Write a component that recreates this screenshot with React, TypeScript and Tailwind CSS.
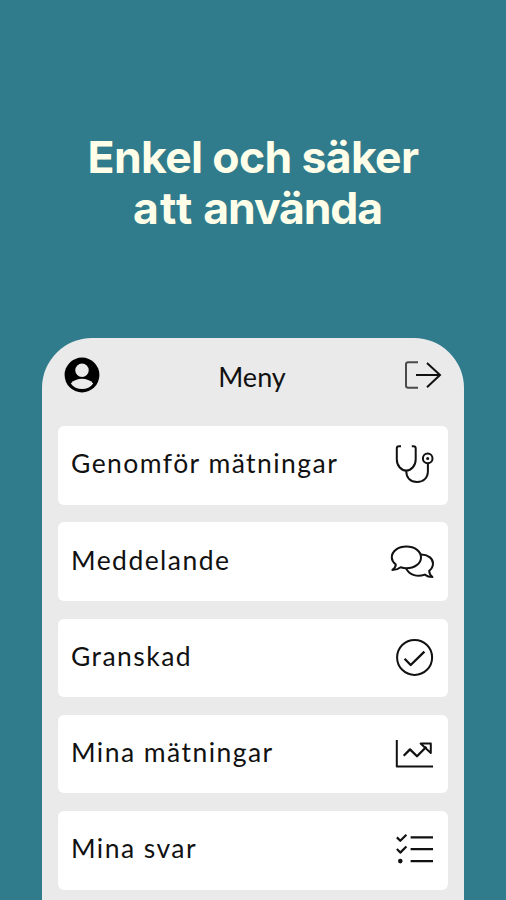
import type { ReactNode } from 'react'

interface MenuItem {
  label: string
  icon: ReactNode
}

const menuItems: MenuItem[] = [
  {
    label: 'Genomför mätningar',
    icon: (
      <>
        <path d="M11 3.2H9Q6.8 3.2 6.8 5.4V16.2C6.8 22.6 11 27.5 16.2 27.5S25.7 22.6 25.7 16.2V5.4Q25.7 3.2 23.5 3.2H21.8" />
        <path d="M16.2 27.5C16.2 35 20.6 39 27 39S37.9 35 37.9 28V20.4" />
        <circle cx="37.7" cy="15.4" r="4.8" />
        <circle cx="37.7" cy="15.4" r="1.5" fill="currentColor" stroke="none" />
      </>
    ),
  },
  {
    label: 'Meddelande',
    icon: (
      <>
        <path d="M10.7 27.2C12.4 27.8 14.3 28.2 16.4 28.2C24.5 28.2 31 23.6 31 17.4S24.5 6.6 16.4 6.6S1.8 11.2 1.8 17.4C1.8 20 3.4 22.4 5.8 24.4C5.8 26.6 4.2 28.6 2.3 30C5.6 30 8.6 28.8 10.7 27.2Z" />
        <path d="M31 14.6C38 14.6 43 18.3 43 23.4C43 26.2 41.6 28.8 39.2 30.8C39.2 33.4 40.6 35.5 42.4 37C39.4 37 36.8 36.2 34.8 34.6C27.6 37.2 19.6 35.4 16.2 28.6" />
      </>
    ),
  },
  {
    label: 'Granskad',
    icon: (
      <>
        <circle cx="24.6" cy="21.4" r="17.5" />
        <path d="M14.6 22.8L20.7 29L34.4 15.6" strokeWidth="2.3" />
      </>
    ),
  },
  {
    label: 'Mina mätningar',
    icon: (
      <>
        <path d="M6.8 8V34.6H43" />
        <path d="M13.7 23.7L20 17.4L27 24.2L36.4 14.8" strokeWidth="2.3" />
        <path d="M30.6 11.6H40.8V21Z" />
      </>
    ),
  },
  {
    label: 'Mina svar',
    icon: (
      <>
        <path d="M6.9 9.4L10.3 12.8L16.4 6.8M6.9 21.1L10.3 24.6L16.4 18.5" strokeWidth="2.2" />
        <circle cx="10.3" cy="33.1" r="2.3" fill="currentColor" stroke="none" />
        <path d="M20.6 9.4H43M20.6 21.1H43M20.6 33.1H43" strokeWidth="2.2" />
      </>
    ),
  },
]

function ProfileIcon() {
  return (
    <svg viewBox="0 0 36 36" className="h-9 w-9">
      <circle cx="18" cy="18" r="17.4" fill="#000" />
      <circle cx="18" cy="13.2" r="6.7" fill="#ebebeb" />
      <path d="M6.8 26.4C9.6 23.4 13.6 21.8 18 21.8S26.4 23.4 29.2 26.4C26.6 30 22.6 32 18 32S9.4 30 6.8 26.4Z" fill="#ebebeb" />
    </svg>
  )
}

function LogoutIcon() {
  return (
    <svg viewBox="0 0 38 36" className="h-9 w-[38px]" fill="none" stroke="#111" strokeWidth="2">
      <path d="M14 5.2H4.2Q2 5.2 2 7.4V28.6Q2 30.8 4.2 30.8H14" stroke="#4a4a4a" />
      <path d="M12 18H36M23 6L36 18L23 30.2" />
    </svg>
  )
}

function MenuCard({ label, icon }: MenuItem) {
  return (
    <li className="flex h-[78.5px] items-center justify-between rounded-md bg-white pr-3.5 pl-[13px]">
      <span className="pb-0.5 text-[26.5px] tracking-[1.45px]">{label}</span>
      <svg
        viewBox="0 0 44 44"
        className="h-11 w-11 shrink-0"
        fill="none"
        stroke="currentColor"
        strokeWidth="2"
        strokeLinejoin="round"
      >
        {icon}
      </svg>
    </li>
  )
}

export default function App() {
  return (
    <main className="flex h-[900px] w-[506px] flex-col overflow-hidden bg-[#307c8d]">
      <h1 className="h-[338px] shrink-0 pt-[132px] text-center font-['Inter',sans-serif] text-[44.5px] leading-[50.5px] font-bold tracking-[-0.65px] text-[#fffee9]">
        <span className="block">Enkel och säker</span>
        <span className="block pl-[9px]">
          <span className="tracking-[1.2px]">att</span> <span className="tracking-[-1.1px]">använda</span>
        </span>
      </h1>
      <section className="mx-[42px] h-[620px] shrink-0 rounded-t-[50px] bg-[#eaeaea] px-4 font-['Lato',sans-serif] text-[#111]">
        <header className="flex h-[88px] items-center justify-between pr-1.5 pb-3.5 pl-1.5">
          <ProfileIcon />
          <h2 className="pt-1 text-[27px]">Meny</h2>
          <LogoutIcon />
        </header>
        <ul className="flex flex-col gap-[17.75px]">
          {menuItems.map((item) => (
            <MenuCard key={item.label} label={item.label} icon={item.icon} />
          ))}
        </ul>
      </section>
    </main>
  )
}
